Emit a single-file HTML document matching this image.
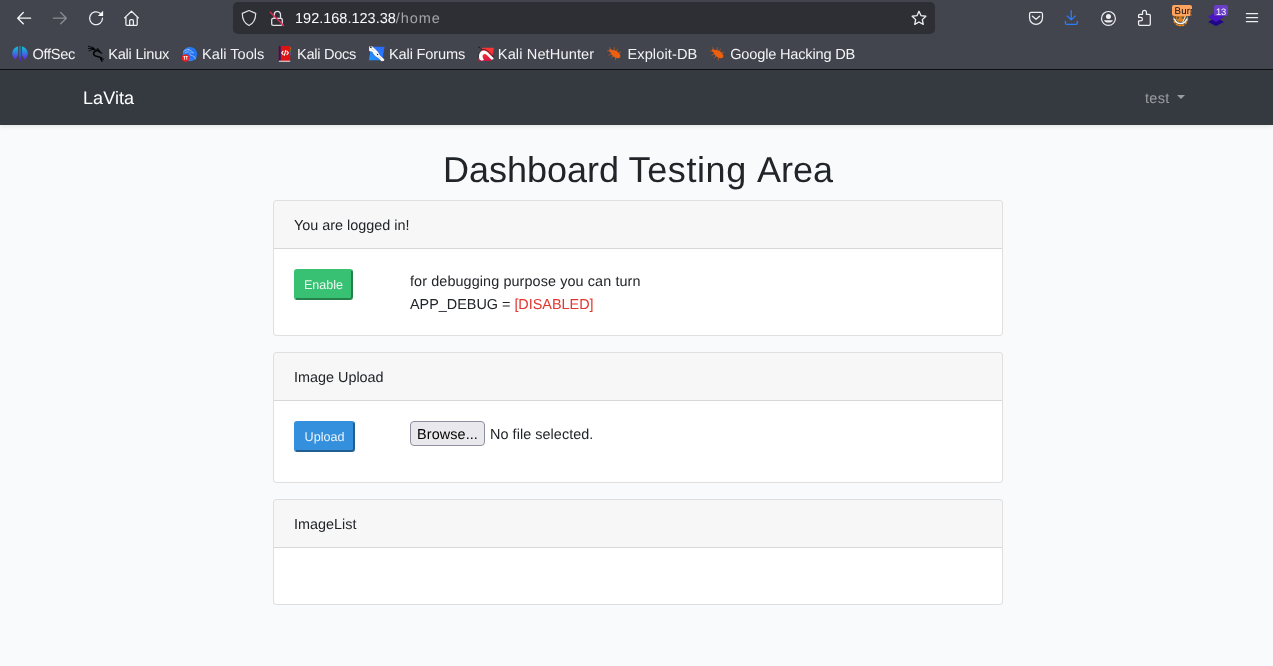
<!DOCTYPE html>
<html lang="en">
<head>
<meta charset="utf-8">
<title>LaVita</title>
<style>
*{box-sizing:border-box;margin:0;padding:0}
html,body{width:1273px;height:666px;overflow:hidden}
html{-webkit-font-smoothing:antialiased;text-rendering:geometricPrecision}
#chrome,#brand,#user,h1,.card,.btn,.txt,#browse{will-change:transform}
body{font-family:"Liberation Sans",sans-serif;background:#f8fafc;color:#212529;position:relative;font-size:14.4px;line-height:1.6}
.abs{position:absolute}
/* ---------- browser chrome ---------- */
#chrome{position:absolute;left:0;top:0;width:1273px;height:70px;background:#42454d;border-bottom:1px solid #0f1014}
#urlbar{position:absolute;left:233px;top:2px;width:702px;height:32px;background:#2d2f34;border-radius:5px}
#url{position:absolute;left:295px;top:3px;height:32px;line-height:32px;font-size:14.5px;color:#fbfbfe;white-space:nowrap;letter-spacing:0}
#url span{color:#a4a5aa;letter-spacing:.9px}
.ico{position:absolute;width:16px;height:16px;overflow:visible}
.bm{position:absolute;top:43px;height:22px;line-height:22px;font-size:14.6px;color:#f3f3f5;white-space:nowrap;transform:translateY(.5px)}
.bmi{position:absolute;top:46px;width:16px;height:16px;overflow:visible}
/* ---------- page ---------- */
#nav{position:absolute;left:0;top:70px;width:1273px;height:55px;background:#343a40;box-shadow:0 2px 4px rgba(0,0,0,.075)}
#brand{position:absolute;left:83px;top:71px;letter-spacing:.08px;height:55px;line-height:55px;font-size:18px;color:#fff;white-space:nowrap}
#user{position:absolute;left:1145px;top:72px;letter-spacing:.35px;height:55px;line-height:55px;font-size:14.4px;color:rgba(255,255,255,.5);white-space:nowrap}
#caret{position:absolute;left:1177px;top:95px;width:0;height:0;border-left:4.3px solid transparent;border-right:4.3px solid transparent;border-top:4.3px solid rgba(255,255,255,.5)}
h1{position:absolute;left:0;width:1273px;top:141px;height:58px;line-height:58px;font-size:36px;font-weight:400;color:#212529;white-space:nowrap}
h1 span{position:absolute;top:0}
.card{position:absolute;left:273px;width:730px;background:#fff;border:1px solid rgba(0,0,0,.125);border-radius:4px;overflow:hidden}
.card .hd{height:48px;background:rgba(0,0,0,.03);border-bottom:1px solid rgba(0,0,0,.125);padding:14px 20px 10px;line-height:23px;font-size:14.4px;white-space:nowrap}
.btn{position:absolute;height:31px;line-height:29px;border-radius:3.2px;color:rgba(255,255,255,.9);font-size:12.6px;text-align:center;border:2px solid;white-space:nowrap}
.txt{position:absolute;white-space:nowrap;font-size:14.4px;line-height:23px}
</style>
</head>
<body>
<div id="chrome">
  <div id="urlbar"></div>
  <div id="url">192.168.123.38<span>/home</span></div>
  <!-- back -->
  <svg class="ico" style="left:16px;top:10px" viewBox="0 -0.18 16 16" fill="none" stroke="#f6f6f9" stroke-width="1.35" stroke-linecap="round" stroke-linejoin="round"><path d="M14.6 8H1.9M7.3 2.4 1.7 8l5.6 5.6"/></svg>
  <!-- forward -->
  <svg class="ico" style="left:52px;top:10px" viewBox="0 -0.18 16 16" fill="none" stroke="#8a8c91" stroke-width="1.35" stroke-linecap="round" stroke-linejoin="round"><path d="M1.4 8h12.7M8.7 2.4 14.3 8l-5.6 5.6"/></svg>
  <!-- reload -->
  <svg class="ico" style="left:88px;top:10px" viewBox="0 0 16 16"><path d="M12.2 3.3A6.45 6.45 0 1 0 14.5 8.2" fill="none" stroke="#efeff3" stroke-width="1.25" stroke-linecap="round"/><path d="M15.1.7v5.4H9.9z" fill="#fbfbfe"/></svg>
  <!-- home -->
  <svg class="ico" style="left:123px;top:10px" viewBox="-0.5 0 16 16" fill="none" stroke="#efeff3" stroke-width="1.25" stroke-linecap="round" stroke-linejoin="round"><path d="M1.1 7.9 8 1.2l6.9 6.7M2.4 7v7.2a1.2 1.2 0 0 0 1.2 1.2h8.9a1.2 1.2 0 0 0 1.2-1.2V7M6.2 15.3v-4.6a1.1 1.1 0 0 1 1.1-1.1h1.5a1.1 1.1 0 0 1 1.1 1.1v4.6"/></svg>
  <!-- shield -->
  <svg class="ico" style="left:241px;top:10px" viewBox="0 0 16 16" fill="none" stroke="#e0e0e4" stroke-width="1.2" stroke-linejoin="round"><path d="M8 .5 1.3 3.4c0 5.6 2.4 9.9 6.7 12.1 4.3-2.2 6.7-6.5 6.7-12.1z"/></svg>
  <!-- lock insecure -->
  <svg class="ico" style="left:269px;top:10px" viewBox="0 0 16 16" fill="none" stroke-linecap="round"><path d="M5.3 7.8V4.4a3.1 3.1 0 0 1 6.2 0v3.6" stroke="#e0e0e4" stroke-width="1.3"/><rect x="2.7" y="8.4" width="10.6" height="7" rx="1.4" stroke="#e0e0e4" stroke-width="1.3"/><path d="M1.3 2.3 14.6 15.6" stroke="#e22850" stroke-width="1.4"/></svg>
  <!-- star -->
  <svg class="ico" style="left:911px;top:10px" viewBox="0 0 16 16" fill="none" stroke="#efeff2" stroke-width="1.3" stroke-linejoin="round"><path d="M8 1.250l2.050 4.400 4.800.6-3.500 3.350.9 4.800L8 12l-4.250 2.400.9-4.800-3.500-3.350 4.800-.6z"/></svg>
  <!-- pocket -->
  <svg class="ico" style="left:1028px;top:10px" viewBox="0 0 16 16" fill="none" stroke="#efeff3" stroke-width="1.25" stroke-linecap="round" stroke-linejoin="round"><path d="M3.070 2.420H12.980a1.500 1.500 0 0 1 1.500 1.500V7.900a6.455 6.480 0 0 1-12.910 0V3.920a1.500 1.500 0 0 1 1.500-1.500z"/><path d="M4.400 6.200 8 9.300l3.600-3.100"/></svg>
  <!-- download -->
  <svg class="ico" style="left:1063px;top:9px" viewBox="-0.25 0 16 16" fill="none" stroke="#2b7dff" stroke-width="1.3" stroke-linecap="round" stroke-linejoin="round"><path d="M8 1.600v9.100M3.800 6.900 8 10.900l4.200-4M2.150 12.400v1.600a1.350 1.350 0 0 0 1.350 1.350h9.200a1.350 1.350 0 0 0 1.350-1.350v-1.600"/></svg>
  <!-- account -->
  <svg class="ico" style="left:1100px;top:10px" viewBox="-0.45 -0.45 16 16"><circle cx="8" cy="8" r="6.950" fill="none" stroke="#efeff3" stroke-width="1.200"/><circle cx="8" cy="6" r="2.500" fill="#efeff3"/><path d="M3.500 9.700h9a4.600 3.100 0 0 1-9 0z" fill="#efeff3"/></svg>
  <!-- extensions -->
  <svg class="ico" style="left:1135px;top:10px" viewBox="-0.9 -0.1 16 16" fill="none" stroke="#efeff3" stroke-width="1.25" stroke-linejoin="round"><path d="M6.600 4.270V2.270a1.950 1.950 0 0 1 3.900 0V4.270H13.300a1.100 1.100 0 0 1 1.100 1.100V14.180a1.100 1.100 0 0 1-1.100 1.100H3.770a1.100 1.100 0 0 1-1.100-1.100V10.850H4.750a1.750 1.750 0 0 0 0-3.500H2.670V5.370a1.100 1.100 0 0 1 1.100-1.100z"/></svg>
  <!-- burp / fox -->
  <svg class="ico" style="left:1172px;top:10px" viewBox="-0.6 -0.4 16 16"><circle cx="8" cy="8.400" r="6.900" fill="none" stroke="#f08a12" stroke-width="1.300" stroke-dasharray="2.600 .8"/><path d="M3.200 5.500h9.400v3.200l-2 2.600H5.400L3.200 8.700z" fill="#ee8a1a" fill-opacity=".85"/><path d="M4.200 6.400h2.200v2H4.200zM9.200 6.400h2.200v2H9.200z" fill="#42454d" fill-opacity=".75"/><path d="M2 8.800c.9 2.700 3.200 4.200 6 4.200s5.100-1.500 6-4.200" fill="none" stroke="#f4f4f6" stroke-width="1.500" stroke-linecap="round"/><path d="M13.300 4.800 10.200 11.600" stroke="#e8e8ea" stroke-width="1" stroke-linecap="round"/><path d="M5 14.800h6" stroke="#f08a12" stroke-width="1.100"/></svg>
  <div class="abs" style="left:1172px;top:5px;width:20px;height:11px;background:#fea45e;border-radius:2px;overflow:hidden;color:#0c0c0d;font-size:9.700px;line-height:13px;padding-left:2.600px;white-space:nowrap;letter-spacing:.1px">Burp</div>
  <!-- stacked layers -->
  <svg class="ico" style="left:1208px;top:10px" viewBox="0 0 16 16"><path d="M8 7.300 16 11.900 8 16.100 0 11.900z" fill="#1f0788"/><path d="M8 1.200 16 7.100 8 12.100 0 7.100z" fill="#4a14c0"/></svg>
  <div class="abs" style="left:1214px;top:5px;width:14px;height:11px;background:#6b3ec9;border-radius:2px;color:#fff;font-size:9.400px;line-height:13px;text-align:center;white-space:nowrap;letter-spacing:-.3px">13</div>
  <!-- menu -->
  <svg class="ico" style="left:1244px;top:10px" viewBox="0 0 16 16" fill="none" stroke="#efeff3" stroke-width="1.25" stroke-linecap="round"><path d="M2.400 3.550h11.200M2.400 7.550h11.200M2.400 11.550h11.200"/></svg>
  <!-- bookmarks -->
  <svg class="bmi" style="left:12px;top:46px" viewBox="0 0 16 16"><defs><linearGradient id="og" x1="0" y1="0" x2="0" y2="1"><stop offset="0" stop-color="#10bfd6"/><stop offset=".5" stop-color="#3478e0"/><stop offset="1" stop-color="#6a22e6"/></linearGradient><linearGradient id="og2" x1="0" y1="0" x2="0" y2="1"><stop offset="0" stop-color="#1f8fa8" stop-opacity=".75"/><stop offset=".6" stop-color="#3b62c8" stop-opacity=".9"/><stop offset=".85" stop-color="#5d1fea"/><stop offset="1" stop-color="#5d1fea"/></linearGradient></defs><path d="M6.100.6C2.600 1.300.3 4.100.3 7.400c0 2.600 1.300 4.900 3.400 6.300.6-1.900 1.400-3.300 2.400-4.600z" fill="url(#og)"/><path d="M9.900.6c3.500.7 5.800 3.500 5.800 6.800 0 2.600-1.300 4.900-3.400 6.300-.6-1.900-1.400-3.300-2.400-4.600z" fill="url(#og)"/><path d="M7.100 0h1.800v10.500L8.500 15.600h-1L7.100 10.500z" fill="url(#og2)"/></svg>
  <div class="bm" id="bm1" style="left:32.6px;letter-spacing:-0.330px">OffSec</div>
  <svg class="bmi" style="left:88px;top:45px" viewBox="0 -0.5 16 16" fill="none" stroke="#050507" stroke-linecap="round" stroke-linejoin="round"><path d="M.4.700 5.400 2.400M.4 2.900l4.800.2M1 5.300 5.200 3.800" stroke-width=".9"/><path d="M4.300 2.400 6.200 2.700l1 1.500-2.200.2z" fill="#050507" stroke-width=".5"/><path d="M6.500 3.600c.7 1 1.700 1.500 3 1.500" stroke-width=".8"/><path d="M9.600 2.700 14.200 8.200 12.200 7.300 10 6 8.800 5z" fill="#050507" stroke-width=".5"/><path d="M8.700 5.200C6.800 5.400 5.600 6.500 5.600 8c0 1.900 1.800 2.700 3.900 3 2 .3 3.400.9 3.900 2.400l.5 2.300" stroke-width="1.500"/><path d="M12.300 11.700l2.600 1.100.5 1.500M13.200 13l-.7 1.200" stroke-width=".9"/></svg>
  <div class="bm" id="bm2" style="left:108.2px;letter-spacing:-0.230px">Kali Linux</div>
  <svg class="bmi" style="left:182px;top:46px" viewBox="0 0 16 16"><defs><radialGradient id="tg" cx=".65" cy=".45" r=".7"><stop offset="0" stop-color="#1468f4"/><stop offset="1" stop-color="#3a8bf5"/></radialGradient></defs><circle cx="7.900" cy="8.100" r="7.200" fill="url(#tg)"/><path d="M1.600 5.400c1.600-1.400 3.400-2 5.200-1.700M3.400 6.700C4.700 5.900 6 5.700 7.200 6M6.300 3.500c2.200.7 4 2 5.300 3.700-1.300-.6-2.500-.7-3.300-.2-.9.600-.7 1.600.3 2.100 1.200.6 2.600.6 3.600 1.400.7.600 1 1.400 1.100 2.400" fill="none" stroke="#d6e7ff" stroke-opacity=".62" stroke-width=".95" stroke-linecap="round"/><circle cx="3.600" cy="12" r="3.700" fill="#ee1c1c"/><path d="M1.500 10.500h1.900M3.800 10.500h1.900M2.450 10.500v3.200M4.750 10.500v3.200" stroke="#fff" stroke-width=".85" fill="none"/></svg>
  <div class="bm" id="bm3" style="left:202.1px;letter-spacing:0.000px">Kali Tools</div>
  <svg class="bmi" style="left:277px;top:45px" viewBox="-0.5 -0.5 16 16"><rect x="1.200" y=".4" width="11.500" height="15" rx=".7" fill="#e01313"/><rect x="1.200" y=".4" width="2" height="15" fill="#14226c"/><rect x="1.400" y="15.200" width="11.300" height="1.100" fill="#ead9d9"/><rect x="12.500" y="1.800" width=".8" height="2.300" fill="#f0701a" opacity=".85"/><rect x="12.500" y="4.600" width=".8" height="2.300" fill="#3f9a52" opacity=".8"/><rect x="12.500" y="7.400" width=".8" height="2.300" fill="#5a55c8" opacity=".85"/><path d="M5.700 5.700 4.200 7.400 5.700 9.100M9.400 5.700l1.500 1.700-1.500 1.700M8.200 5 6.900 9.800" stroke="#fff" stroke-width="1.050" fill="none" stroke-linecap="round" stroke-linejoin="round"/></svg>
  <div class="bm" id="bm4" style="left:297.0px;letter-spacing:-0.290px">Kali Docs</div>
  <svg class="bmi" style="left:368px;top:45px" viewBox="-0.5 -0.5 16 16"><defs><linearGradient id="fg" x1="0" y1="1" x2="1" y2="0"><stop offset="0" stop-color="#1e96ff"/><stop offset="1" stop-color="#2c66ff"/></linearGradient></defs><path d="M2.600 1.300h13.400l-2.300 13.400H.4z" fill="url(#fg)"/><path d="M.5.600 3.600.8 6.200 3.100 9.600 6.500l2 3.400 4.200 3.900-.3 1.800-2.600.2-2.500-2.800-3.800-2.500L4.500 8 4 6.400.5 5.600z" fill="#fafafa" stroke="#2b3a5a" stroke-opacity=".45" stroke-width=".4" stroke-linejoin="round"/><path d="M.9.800 2.700 1l.7 1.800-1.300-.2z" fill="#15171c"/><circle cx="9.100" cy="9" r=".65" fill="#1a1c22"/><path d="M3.500 3.300 6 5.400M7.200 7.200l1 1.200M10.500 11.200l2 2" stroke="#8a8f9a" stroke-width=".4" fill="none"/></svg>
  <div class="bm" id="bm5" style="left:389.0px;letter-spacing:-0.155px">Kali Forums</div>
  <svg class="bmi" style="left:478px;top:45px" viewBox="0 -0.5 16 16"><defs><linearGradient id="ng" x1="0" y1="0" x2="0" y2="1"><stop offset="0" stop-color="#ff3434"/><stop offset=".6" stop-color="#f02a3a"/><stop offset="1" stop-color="#cf1448"/></linearGradient></defs><path d="M4.500 2.300h11.400l-2.300 13.200H.2l1.600-7z" fill="url(#ng)"/><path d="M.5 1.300 2 2.500" stroke="#15161a" stroke-width=".95" fill="none" stroke-linecap="round"/><path d="M1.100 12.800C.7 10 1.300 7.400 3 6c1.900-1.500 4.600-1.100 6.700.7 1.600 1.400 3.200 3.500 5.400 5.300.8.700.6 1.900-.5 2.100-1 .2-1.800-.4-2.600-1.300-1.300-1.500-2.400-3.100-4-3.900-1.600-.8-3.200 0-3.400 1.700-.1 1.300.5 2.700 1.500 3.900-1.200.6-2.600.6-3.700-.1-.7-.4-1.100-.9-1.300-1.600z" fill="#fbfbfb"/><path d="M3.200 4.300C5.600 3.500 8.300 4.300 10.300 6.100c1.700 1.500 3.200 3.600 5.300 5.300" stroke="#15161a" stroke-width=".75" fill="none" stroke-linecap="round"/><path d="M1.300 6.500C.3 8.300 0 10.400.5 12.400" stroke="#15161a" stroke-opacity=".6" stroke-width=".5" fill="none"/></svg>
  <div class="bm" id="bm6" style="left:497.8px;letter-spacing:0.110px">Kali NetHunter</div>
  <svg class="bmi bug" style="left:607px;top:45px" viewBox="0 -0.5 16 16"><g transform="rotate(35 8 8.300)"><ellipse cx="8.600" cy="8.300" rx="5.600" ry="3.100" fill="#ec5f0e"/><ellipse cx="2.600" cy="8.300" rx="1.600" ry="1.500" fill="#ec5f0e"/><path d="M5 6 4 3.600M7.600 5.500 7.400 3M10.500 5.800l1.200-2.400M5 10.600l-1.300 2.300M7.600 11.100l-.3 2.500M10.500 10.800l1.300 2.300M1.500 7.400.2 6.300M1.500 9.200.1 10.300" stroke="#ec5f0e" stroke-opacity=".75" stroke-width=".7" stroke-linecap="round" fill="none"/></g></svg>
  <div class="bm" id="bm7" style="left:627.4px;letter-spacing:0.110px">Exploit-DB</div>
  <svg class="bmi bug" style="left:710px;top:45px" viewBox="0 -0.5 16 16"><g transform="rotate(35 8 8.300)"><ellipse cx="8.600" cy="8.300" rx="5.600" ry="3.100" fill="#ec5f0e"/><ellipse cx="2.600" cy="8.300" rx="1.600" ry="1.500" fill="#ec5f0e"/><path d="M5 6 4 3.600M7.600 5.500 7.400 3M10.500 5.800l1.200-2.400M5 10.600l-1.300 2.300M7.600 11.100l-.3 2.500M10.500 10.800l1.300 2.300M1.500 7.400.2 6.300M1.500 9.200.1 10.300" stroke="#ec5f0e" stroke-opacity=".75" stroke-width=".7" stroke-linecap="round" fill="none"/></g></svg>
  <div class="bm" id="bm8" style="left:730.2px;letter-spacing:-0.190px">Google Hacking DB</div>
</div>

<div id="nav"></div>
<div id="brand">LaVita</div>
<div id="user">test</div>
<div id="caret"></div>

<h1><span id="w1" style="left:442.9px">Dashboard</span><span id="w2" style="left:628.6px;letter-spacing:.6px">Testing</span><span id="w3" style="left:757px">Area</span></h1>

<div class="card" style="top:200px;height:136px">
  <div class="hd">You are logged in!</div>
</div>
<div class="btn" id="b1" style="left:294px;top:269px;width:59px;background:#38c172;border-color:#38c172 #25804b #25804b #38c172">Enable</div>
<div class="txt" id="t1" style="left:410px;top:271px;letter-spacing:.1px">for debugging purpose you can turn</div>
<div class="txt" id="t2" style="left:410px;top:294px">APP_DEBUG = <span style="color:#e3342f">[DISABLED]</span></div>

<div class="card" style="top:352px;height:131px">
  <div class="hd">Image Upload</div>
</div>
<div class="btn" id="b2" style="left:294px;top:421px;width:61px;background:#3490dc;border-color:#3490dc #225f91 #225f91 #3490dc">Upload</div>
<div class="abs" id="browse" style="left:410px;top:421px;width:75px;height:25px;line-height:27px;letter-spacing:.1px;background:#e9e9ed;border:1px solid #8f8f9d;border-radius:4px;font-size:14.4px;text-align:center;color:#000;white-space:nowrap">Browse...</div>
<div class="txt" id="t3" style="left:490px;top:424px;letter-spacing:.06px">No file selected.</div>

<div class="card" style="top:499px;height:106px">
  <div class="hd">ImageList</div>
</div>
</body>
</html>
